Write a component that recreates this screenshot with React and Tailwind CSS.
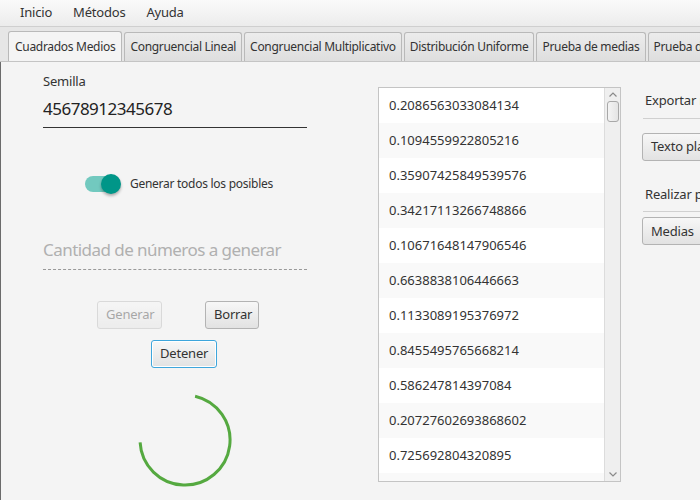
const numbers = [
  "0.2086563033084134",
  "0.1094559922805216",
  "0.35907425849539576",
  "0.34217113266748866",
  "0.10671648147906546",
  "0.6638838106446663",
  "0.1133089195376972",
  "0.8455495765668214",
  "0.586247814397084",
  "0.20727602693868602",
  "0.725692804320895",
  "0.4417302648207551",
];

const tabs = [
  "Cuadrados Medios",
  "Congruencial Lineal",
  "Congruencial Multiplicativo",
  "Distribución Uniforme",
  "Prueba de medias",
  "Prueba de varianza",
];

function FxButton({ children, disabled, focused, className = "" }) {
  return (
    <button
      className={`h-[28px] px-[8px] rounded-[3px] text-[13px] leading-none tracking-[-0.2px] bg-gradient-to-b from-[#f7f7f7] to-[#e2e2e2] ${
        focused
          ? "border border-[#3ea6dc] shadow-[inset_0_0_0_1px_#ffffff]"
          : "border border-[#b3b3b3]"
      } ${disabled ? "opacity-40" : "text-[#333]"} ${className}`}
    >
      {children}
    </button>
  );
}

export default function App() {
  return (
    <div
      className="w-[700px] h-[500px] overflow-hidden bg-[#f4f4f4] text-[#333] flex flex-col"
      style={{ fontFamily: '"Noto Sans", "Open Sans", sans-serif' }}
    >
      {/* menu */}
      <div className="h-[27px] shrink-0 flex items-center gap-[20px] pl-[20px] text-[13px] tracking-[-0.2px] bg-gradient-to-b from-[#fafafa] to-[#ececec] border-b border-[#cfcfcf]">
        <span>Inicio</span>
        <span className="ml-[1px]">Métodos</span>
        <span className="ml-[1px]">Ayuda</span>
      </div>

      {/* tabs header */}
      <div className="h-[35px] shrink-0 flex items-end gap-[2px] pl-[8px] bg-[#e6e6e6] border-b border-[#c4c4c4] overflow-hidden whitespace-nowrap">
        {tabs.map((t, i) =>
          i === 0 ? (
            <div
              key={t}
              className="h-[31px] px-[6px] flex items-center text-[12px] tracking-[-0.3px] bg-[#f4f4f4] border border-b-0 border-[#b9b9b9] rounded-t-[3px] -mb-px shrink-0"
            >
              {t}
            </div>
          ) : (
            <div
              key={t}
              className="h-[29px] px-[5px] flex items-center text-[12px] tracking-[-0.3px] bg-gradient-to-b from-[#ececec] to-[#dedede] border border-b-0 border-[#b9b9b9] rounded-t-[3px] shrink-0"
            >
              {t}
            </div>
          )
        )}
      </div>

      {/* content */}
      <div className="flex-1 flex border-l border-[#6b6b6b]">
        {/* left form */}
        <div className="w-[377px] shrink-0 flex flex-col pl-[42px] pt-[10px]">
          <div className="text-[13px] tracking-[-0.2px]">Semilla</div>
          <div className="w-[264px] mt-[4px] pb-[6px] text-[17px] tracking-[-0.5px] text-[#222] border-b-[1.5px] border-[#333]">
            45678912345678
          </div>

          <div className="flex items-center mt-[47px] ml-[42px]">
            <div className="relative w-[34px] h-[16px] rounded-full bg-[#72c9bf]">
              <div className="absolute right-[-2px] top-[-2px] w-[20px] h-[20px] rounded-full bg-[#009688] shadow-[0_2px_3px_rgba(0,0,0,0.3)]" />
            </div>
            <span className="ml-[11px] text-[12px] tracking-[-0.27px]">
              Generar todos los posibles
            </span>
          </div>

          <div className="w-[264px] mt-[44px] pb-[6px] text-[17px] tracking-[-0.55px] text-[#b0b0b0] border-b border-dashed border-[#999]">
            Cantidad de números a generar
          </div>

          <div className="flex mt-[31px]">
            <FxButton disabled className="ml-[54px] w-[65px]">
              Generar
            </FxButton>
            <FxButton className="ml-[43px] w-[54px]">Borrar</FxButton>
          </div>
          <div className="flex mt-[11px]">
            <FxButton focused className="ml-[108px] w-[66px]">
              Detener
            </FxButton>
          </div>

          <div className="ml-[94px] mt-[24px]">
            <svg width="96" height="96" viewBox="0 0 96 96">
              <path
                d="M58.1 4.2 A45 45 0 1 1 3.1 50.4"
                fill="none"
                stroke="#55a940"
                strokeWidth="3"
              />
            </svg>
          </div>
        </div>

        {/* list */}
        <div className="mt-[25px] w-[243px] h-[395px] shrink-0 border border-[#c4c4c4] bg-white flex">
          <div className="flex-1 overflow-hidden">
            {numbers.map((n, i) => (
              <div
                key={i}
                className={`h-[35px] flex items-center pl-[10px] text-[13px] ${
                  i % 2 === 0 ? "bg-white" : "bg-[#f9f9f9]"
                }`}
              >
                {n}
              </div>
            ))}
          </div>
          <div className="w-[16px] shrink-0 bg-[#efefef] border-l border-[#dcdcdc] flex flex-col items-center">
            <svg width="10" height="8" viewBox="0 0 10 8" className="mt-[3px]">
              <path d="M1.5 5.5 L5 2 L8.5 5.5" fill="none" stroke="#8a8a8a" strokeWidth="1.2" />
            </svg>
            <div className="mt-[2px] w-[12px] h-[21px] rounded-[3px] border border-[#a8a8a8] bg-gradient-to-r from-[#f4f4f4] to-[#e4e4e4]" />
            <div className="flex-1" />
            <svg width="10" height="8" viewBox="0 0 10 8" className="mb-[3px]">
              <path d="M1.5 2.5 L5 6 L8.5 2.5" fill="none" stroke="#8a8a8a" strokeWidth="1.2" />
            </svg>
          </div>
        </div>

        {/* right panel */}
        <div className="flex-1 pl-[21px] pt-[29px] overflow-hidden whitespace-nowrap">
          <div className="text-[13px] tracking-[-0.2px] pl-[3px]">Exportar resultados</div>
          <div className="mt-[7px] ml-[1px] border-t border-[#d0d0d0]" />
          <div className="mt-[14px]">
            <FxButton className="h-[27px]">Texto plano</FxButton>
          </div>
          <div className="mt-[24px] text-[13px] tracking-[-0.2px] pl-[3px]">Realizar pruebas</div>
          <div className="mt-[7px] ml-[1px] border-t border-[#d0d0d0]" />
          <div className="mt-[5px]">
            <FxButton className="h-[27px]">Medias</FxButton>
          </div>
        </div>
      </div>
    </div>
  );
}
